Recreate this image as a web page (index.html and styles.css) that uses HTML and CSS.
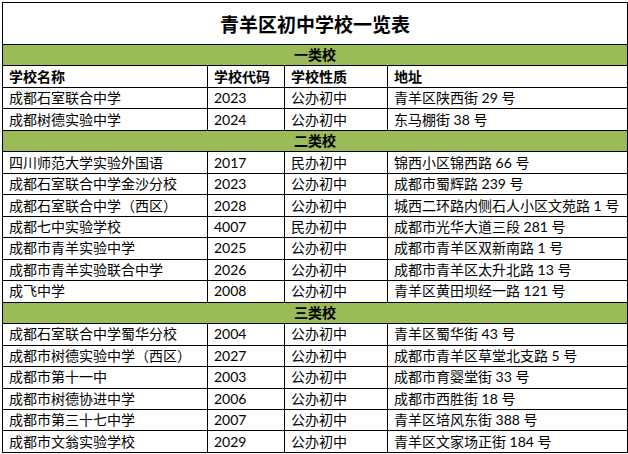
FILE: index.html
```html
<!DOCTYPE html>
<html lang="zh-CN">
<head>
<meta charset="utf-8">
<title>青羊区初中学校一览表</title>
<link rel="stylesheet" href="styles.css">
</head>
<body>
<table class="schools">
  <colgroup>
    <col class="c-name">
    <col class="c-code">
    <col class="c-type">
    <col class="c-addr">
  </colgroup>
  <tr class="title-row"><td colspan="4" class="title">青羊区初中学校一览表</td></tr>
  <tr class="row band"><td colspan="4">一类校</td></tr>
  <tr class="row head"><td>学校名称</td><td>学校代码</td><td>学校性质</td><td>地址</td></tr>
  <tr class="row"><td>成都石室联合中学</td><td>2023</td><td>公办初中</td><td>青羊区陕西街 29 号</td></tr>
  <tr class="row"><td>成都树德实验中学</td><td>2024</td><td>公办初中</td><td>东马棚街 38 号</td></tr>
  <tr class="row band"><td colspan="4">二类校</td></tr>
  <tr class="row"><td>四川师范大学实验外国语</td><td>2017</td><td>民办初中</td><td>锦西小区锦西路 66 号</td></tr>
  <tr class="row"><td>成都石室联合中学金沙分校</td><td>2023</td><td>公办初中</td><td>成都市蜀辉路 239 号</td></tr>
  <tr class="row"><td>成都石室联合中学（西区）</td><td>2028</td><td>公办初中</td><td>城西二环路内侧石人小区文苑路 1 号</td></tr>
  <tr class="row"><td>成都七中实验学校</td><td>4007</td><td>民办初中</td><td>成都市光华大道三段 281 号</td></tr>
  <tr class="row"><td>成都市青羊实验中学</td><td>2025</td><td>公办初中</td><td>成都市青羊区双新南路 1 号</td></tr>
  <tr class="row"><td>成都市青羊实验联合中学</td><td>2026</td><td>公办初中</td><td>成都市青羊区太升北路 13 号</td></tr>
  <tr class="row"><td>成飞中学</td><td>2008</td><td>公办初中</td><td>青羊区黄田坝经一路 121 号</td></tr>
  <tr class="row band"><td colspan="4">三类校</td></tr>
  <tr class="row"><td>成都石室联合中学蜀华分校</td><td>2004</td><td>公办初中</td><td>青羊区蜀华街 43 号</td></tr>
  <tr class="row"><td>成都市树德实验中学（西区）</td><td>2027</td><td>公办初中</td><td>成都市青羊区草堂北支路 5 号</td></tr>
  <tr class="row"><td>成都市第十一中</td><td>2003</td><td>公办初中</td><td>成都市育婴堂街 33 号</td></tr>
  <tr class="row"><td>成都市树德协进中学</td><td>2006</td><td>公办初中</td><td>成都市西胜街 18 号</td></tr>
  <tr class="row"><td>成都市第三十七中学</td><td>2007</td><td>公办初中</td><td>青羊区培风东街 388 号</td></tr>
  <tr class="row"><td>成都市文翁实验学校</td><td>2029</td><td>公办初中</td><td>青羊区文家场正街 184 号</td></tr>
</table>
</body>
</html>
```
FILE: styles.css
```css
html, body {
  margin: 0;
  padding: 0;
  background: #ffffff;
}
body {
  padding: 2px 0 0 2px;
}
.schools {
  border-collapse: collapse;
  table-layout: fixed;
  width: 625px;
  font-family: "Lato", "Noto Sans CJK SC", sans-serif;
  font-size: 14px;
  color: #000;
}
.c-name { width: 205px; }
.c-code { width: 77px; }
.c-type { width: 103px; }
.c-addr { width: 240px; }
.schools td {
  border: 1px solid #000;
  padding: 0 0 0 6px;
  line-height: 16px;
  white-space: nowrap;
  overflow: hidden;
  vertical-align: middle;
}
.title-row { height: 42px; }
.schools td.title {
  text-align: center;
  font-family: "Noto Sans CJK SC", sans-serif;
  font-weight: bold;
  font-size: 19px;
  padding: 0;
}
.row { height: 21.47px; }
.band td {
  background: #9bbb59;
  text-align: center;
  font-weight: bold;
  padding: 0;
}
.head td {
  font-weight: bold;
}
```
